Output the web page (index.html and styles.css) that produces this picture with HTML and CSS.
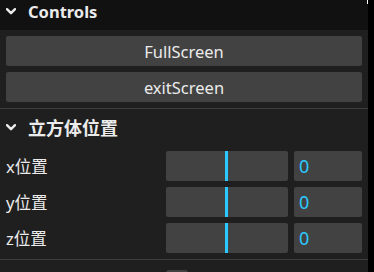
FILE: index.html
```html
<!DOCTYPE html>
<html>
<head>
<meta charset="utf-8">
<link rel="stylesheet" href="styles.css">
</head>
<body>
<div class="gui">
  <div class="scroll-thumb"></div>
  <div class="root-title">
    <svg class="chev" width="10" height="7" viewBox="0 0 10 7"><polyline points="1,1.2 5,5.2 9,1.2" fill="none" stroke="#ebebeb" stroke-width="2.4" stroke-linecap="round" stroke-linejoin="round"/></svg>
    <span class="title-text latin">Controls</span>
  </div>
  <div class="children">
    <div class="button-row"><div class="button">FullScreen</div></div>
    <div class="button-row"><div class="button">exitScreen</div></div>
    <div class="folder">
      <div class="folder-title">
        <svg class="chev" width="10" height="7" viewBox="0 0 10 7"><polyline points="1,1.2 5,5.2 9,1.2" fill="none" stroke="#ebebeb" stroke-width="2.4" stroke-linecap="round" stroke-linejoin="round"/></svg>
        <span class="title-text cjk">立方体位置</span>
      </div>
      <div class="folder-children">
        <div class="row">
          <div class="name">x位置</div>
          <div class="widget">
            <div class="slider"><div class="fill" style="width:51%"></div></div>
            <div class="number">0</div>
          </div>
        </div>
        <div class="row">
          <div class="name">y位置</div>
          <div class="widget">
            <div class="slider"><div class="fill" style="width:51%"></div></div>
            <div class="number">0</div>
          </div>
        </div>
        <div class="row">
          <div class="name">z位置</div>
          <div class="widget">
            <div class="slider"><div class="fill" style="width:51%"></div></div>
            <div class="number">0</div>
          </div>
        </div>
      </div>
    </div>
    <div class="row after-folder">
      <div class="name"></div>
      <div class="widget"><div class="checkbox"></div></div>
    </div>
  </div>
</div>
</body>
</html>
```
FILE: styles.css
```css
html, body {
  margin: 0;
  padding: 0;
  background: #000;
  height: 100%;
  overflow: hidden;
}
.gui {
  position: relative;
  width: 368px;
  height: 100%;
  overflow: hidden;
  background: #1f1f1f;
  color: #ebebeb;
  font-family: "Noto Sans", "Noto Sans CJK SC", sans-serif;
  font-size: 16.5px;
}
.scroll-thumb {
  position: absolute;
  left: 367px;
  top: 0;
  width: 3px;
  height: 4px;
  background: #fff;
}
.root-title {
  height: 38px;
  margin-top: -8px;
  background: #111111;
  display: flex;
  align-items: center;
  padding-left: 6px;
}
.chev {
  display: block;
  flex-shrink: 0;
}
.title-text {
  margin-left: 12px;
  font-weight: 700;
}
.title-text.latin {
  font-size: 16.5px;
}
.title-text.cjk {
  font-size: 18px;
  font-family: "Noto Sans CJK SC", sans-serif;
}
.children {
  display: flex;
  flex-direction: column;
  gap: 6px;
  padding-top: 6px;
}
.button-row {
  padding: 0 6px;
}
.button {
  height: 30px;
  background: #424242;
  border-radius: 2px;
  display: flex;
  align-items: center;
  justify-content: center;
}
.folder {
  border-top: 1px solid #3c3c3c;
}
.folder-title {
  height: 36px;
  display: flex;
  align-items: center;
  padding-left: 6px;
}
.folder-children {
  display: flex;
  flex-direction: column;
  gap: 6px;
  padding-top: 6px;
}
.row {
  display: flex;
  align-items: center;
  height: 30px;
  padding: 0 6px;
}
.row.after-folder {
  border-top: 1px solid #3c3c3c;
  padding-top: 6px;
}
.name {
  width: 45%;
  flex-shrink: 0;
}
.widget {
  flex: 1;
  display: flex;
  gap: 6px;
  height: 30px;
  align-items: center;
}
.slider {
  flex: 1;
  height: 30px;
  background: #424242;
  border-radius: 2px;
  overflow: hidden;
}
.fill {
  box-sizing: border-box;
  height: 100%;
  border-right: 3px solid #2cc9ff;
}
.number {
  width: 68px;
  height: 30px;
  box-sizing: border-box;
  padding-left: 5px;
  background: #424242;
  border-radius: 2px;
  color: #2cc9ff;
  font-family: "Noto Sans", sans-serif;
  font-size: 18px;
  display: flex;
  align-items: center;
}
.checkbox {
  width: 22px;
  height: 22px;
  background: #424242;
  border-radius: 3px;
}
```
